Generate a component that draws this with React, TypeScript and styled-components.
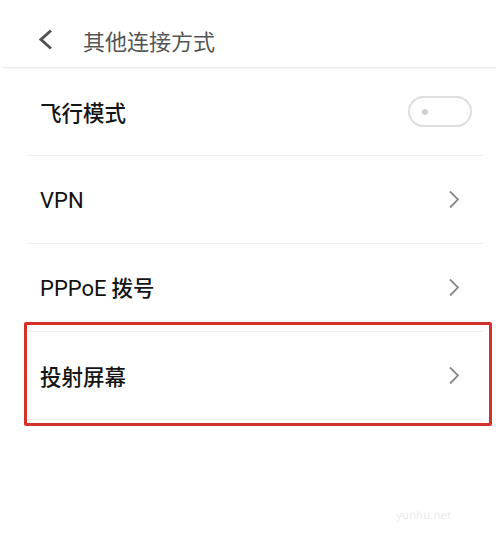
import React from "react";
import styled, { createGlobalStyle } from "styled-components";

const Global = createGlobalStyle`
  html, body { margin: 0; padding: 0; background: #fff; }
  body { font-family: "Noto Sans", "Noto Sans CJK SC", sans-serif; }
`;

const Page = styled.div`
  width: 496px;
  height: 538px;
  position: relative;
  overflow: hidden;
  background: #fff;
`;

const StatusStrip = styled.div`
  height: 6px;
`;

const Header = styled.div`
  height: 62px;
  padding-top: 6px;
  box-sizing: border-box;
  display: flex;
  align-items: center;
  padding-left: 34px;
  border-bottom: 1px solid #ececec;
  box-shadow: 0 1px 1px rgba(0, 0, 0, 0.03);
  margin-left: 3px;
`;

const Title = styled.span`
  font-family: "Noto Sans CJK SC", sans-serif;
  font-size: 22px;
  color: #555;
  margin-left: 29px;
  line-height: 1;
`;

const List = styled.div`
  padding: 0 13px 0 27px;
`;

const Row = styled.div<{ $pr: number }>`
  position: relative;
  height: 87px;
  border-bottom: 1px solid #ededed;
  display: flex;
  align-items: center;
  justify-content: space-between;
  padding-left: 13px;
  padding-right: ${(p) => p.$pr}px;
`;

const Label = styled.span`
  font-family: "Noto Sans CJK SC", sans-serif;
  font-size: 21.5px;
  font-weight: 500;
  color: #151515;
  line-height: 1;
`;

const Latin = styled.span`
  font-family: Roboto, "Liberation Sans", sans-serif;
  font-weight: 400;
  font-size: 22px;
  color: #111;
`;

const Toggle = styled.div`
  width: 64px;
  height: 31px;
  box-sizing: border-box;
  border: 2px solid #dedede;
  border-radius: 16px;
  display: flex;
  align-items: center;
  padding-left: 12px;
`;

const Dot = styled.span`
  width: 6px;
  height: 6px;
  border-radius: 50%;
  background: #cfcfcf;
`;

const Highlight = styled.div`
  position: absolute;
  left: -3px;
  right: -9px;
  top: -10px;
  bottom: -7px;
  border: 3px solid #d4302c;
  border-radius: 2px;
  pointer-events: none;
`;

const Watermark = styled.div`
  position: absolute;
  left: 396px;
  top: 507px;
  font-family: "Noto Sans", sans-serif;
  font-size: 11.5px;
  color: #ebebeb;
`;

const Chevron = () => (
  <svg width="12" height="19" viewBox="0 0 12 19">
    <polyline points="2,1.5 10,9.5 2,17.5" fill="none" stroke="#8a8a8a" strokeWidth="1.8" />
  </svg>
);

const BackIcon = () => (
  <svg width="17" height="21" viewBox="0 0 17 21">
    <polyline points="14,1.5 4,10.5 14,19.5" fill="none" stroke="#555" strokeWidth="3" />
  </svg>
);

export default function App() {
  return (
    <Page>
      <Global />
      <StatusStrip />
      <Header>
        <BackIcon />
        <Title>其他连接方式</Title>
      </Header>
      <List>
        <Row $pr={11}>
          <Label>飞行模式</Label>
          <Toggle>
            <Dot />
          </Toggle>
        </Row>
        <Row $pr={23}>
          <Label>
            <Latin>VPN</Latin>
          </Label>
          <Chevron />
        </Row>
        <Row $pr={23}>
          <Label>
            <Latin>PPPoE</Latin> 拨号
          </Label>
          <Chevron />
        </Row>
        <Row $pr={23}>
          <Label>投射屏幕</Label>
          <Chevron />
          <Highlight />
        </Row>
      </List>
      <Watermark>yunhu.net</Watermark>
    </Page>
  );
}
